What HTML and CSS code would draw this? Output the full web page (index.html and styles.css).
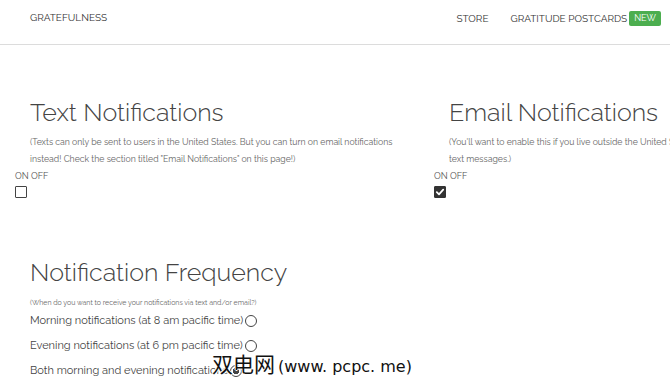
FILE: index.html
```html
<!DOCTYPE html>
<html>
<head>
<meta charset="utf-8">
<link rel="stylesheet" href="styles.css">
</head>
<body>
<nav class="nav">
  <div class="brand">GRATEFULNESS</div>
  <div class="links">
    <span class="link">STORE</span>
    <span class="link">GRATITUDE POSTCARDS <span class="badge">NEW</span></span>
  </div>
</nav>
<main class="main">
  <div class="row">
    <section class="col">
      <h2 class="title">Text Notifications</h2>
      <p class="desc">(Texts can only be sent to users in the United States. But you can turn on email notifications instead! Check the section titled "Email Notifications" on this page!)</p>
      <div class="onoff">ON OFF</div>
      <span class="check"></span>
    </section>
    <section class="col">
      <h2 class="title">Email Notifications</h2>
      <p class="desc">(You'll want to enable this if you live outside the United States and can't receive<br>text messages.)</p>
      <div class="onoff">ON OFF</div>
      <span class="check checked"><svg viewBox="0 0 12 12" width="12" height="12"><path d="M2.8 6.2 L5 8.3 L9.2 3.7" fill="none" stroke="#fff" stroke-width="1.8" stroke-linecap="round" stroke-linejoin="round"/></svg></span>
    </section>
  </div>
  <section class="freq">
    <h2 class="title">Notification Frequency</h2>
    <p class="small">(When do you want to receive your notifications via text and/or email?)</p>
    <div class="opt">Morning notifications (at 8 am pacific time)<span class="radio"></span></div>
    <div class="opt">Evening notifications (at 6 pm pacific time)<span class="radio"></span></div>
    <div class="opt">Both morning and evening notifications<span class="radio on"></span></div>
  </section>
</main>
<div class="watermark"><span class="wm-cjk">双电网</span><span class="wm-latin">(www. pcpc. me)</span></div>
</body>
</html>
```
FILE: styles.css
```css
html, body {
  margin: 0;
  padding: 0;
  overflow: hidden;
  background: #fff;
  font-family: "Raleway", "Lato", "Open Sans", sans-serif;
  color: #444;
}
.nav {
  height: 45px;
  border-bottom: 1px solid #dcdcdc;
  display: flex;
  align-items: flex-start;
  justify-content: space-between;
  padding: 12px 9px 0 30px;
  font-size: 10px;
  line-height: 12px;
  color: #333;
  box-sizing: border-box;
}
.brand { font-weight: 400; }
.links {
  display: flex;
  align-items: center;
  gap: 22px;
}
.link {
  display: flex;
  align-items: center;
  gap: 2px;
}
.badge {
  background: #4cae4f;
  color: #fff;
  font-size: 9px;
  padding: 3px 5px;
  border-radius: 2px;
  line-height: 9px;
  margin-top: -1px;
}
.main {
  padding: 51px 0 0 15px;
}
.row {
  display: flex;
  width: 900px;
}
.col {
  width: 419px;
  flex: none;
}
.title {
  margin: 0 0 0 15px;
  font-weight: 300;
  font-size: 25px;
  line-height: 32px;
  color: #444;
}
.desc {
  margin: 6px 0 0 15px;
  font-size: 8.7px;
  line-height: 17px;
  color: #666;
  width: 372px;
}
.onoff {
  font-size: 9px;
  color: #555;
  margin-top: 1px;
  line-height: 14px;
}
.check {
  display: block;
  width: 10px;
  height: 10px;
  border: 1px solid #444;
  margin-top: 3px;
  border-radius: 1px;
}
.check.checked {
  background: #333;
  border-color: #333;
}
.check svg { display: block; margin: -1px; }
.freq {
  margin-top: 58px;
  padding-left: 15px;
}
.freq .title { margin-left: 0; }
.small {
  margin: 10px 0 6px;
  font-size: 7px;
  line-height: 10px;
  color: #666;
}
.opt {
  font-size: 11px;
  line-height: 14px;
  color: #444;
  display: flex;
  align-items: center;
  margin-bottom: 11px;
}
.radio {
  width: 12px;
  height: 12px;
  border: 1.5px solid #444;
  border-radius: 50%;
  margin-left: 2px;
  display: inline-block;
  box-sizing: border-box;
}
.radio.on {
  background: radial-gradient(circle, #444 45%, #fff 50%);
}
.watermark {
  position: absolute;
  left: 212px;
  top: 348px;
  display: flex;
  align-items: baseline;
  gap: 3px;
  color: #111;
  text-shadow: 1px 0 #fff, -1px 0 #fff, 0 1px #fff, 0 -1px #fff;
  white-space: nowrap;
}
.wm-cjk {
  font-family: "Noto Sans CJK SC", sans-serif;
  font-size: 21px;
}
.wm-latin {
  font-family: "DejaVu Sans", sans-serif;
  font-size: 16px;
}
```
